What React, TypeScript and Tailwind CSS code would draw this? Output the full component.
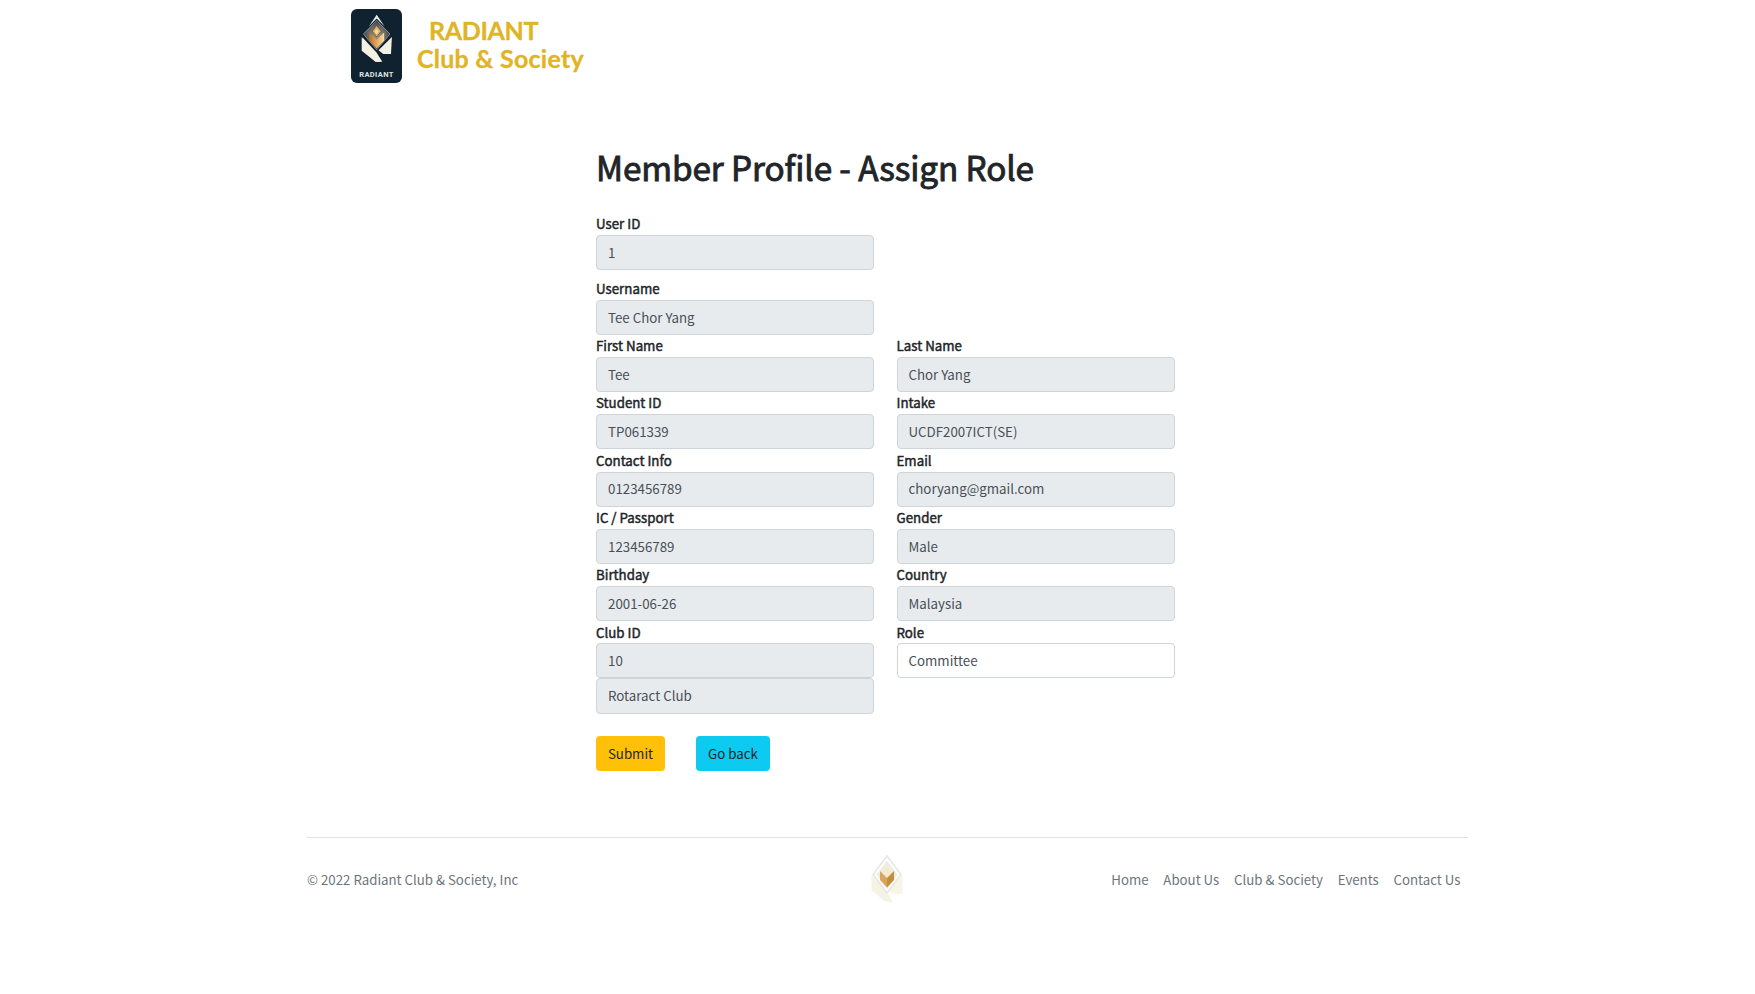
import React from "react";

function Emblem() {
  return (
    <>
      <defs>
        <radialGradient id="halo" gradientUnits="userSpaceOnUse" cx="25.7" cy="26" r="15">
          <stop offset="0" stopColor="#a99c86" />
          <stop offset="0.55" stopColor="#6d6a64" />
          <stop offset="1" stopColor="#2c3a45" />
        </radialGradient>
        <linearGradient id="gold" x1="0" y1="0" x2="1" y2="0">
          <stop offset="0" stopColor="#b5702c" />
          <stop offset="0.5" stopColor="#e3a860" />
          <stop offset="1" stopColor="#f6dca4" />
        </linearGradient>
      </defs>
      <path d="M10.7 28 L30 52.8 H24.5 L10.7 41.8 Z" fill="#f3f1e4" />
      <path d="M12 29 L25.5 43.5 L31.3 52.8 H24.7 L12 41.5 Z" fill="#f3f1e4" />
      <path d="M40.9 28 L40 45 H32.3 L27.5 41.3 Z" fill="#f3f1e4" />
      <path d="M25.7 8.5 L40.6 25 L25.7 43 L10.9 25 Z" fill="#13222e" />
      <path d="M25.7 11.5 L39 25 L25.7 40.8 L12.4 25 Z" fill="url(#halo)" stroke="#a3a7a6" strokeWidth="0.7" />
      <path d="M17.8 17.5 L25.7 5.8 L33.6 17.5 L25.7 9.6 Z" fill="#e6ebec" />
      <path d="M18.2 23.5 L25.7 30.5 L33.2 23.5 V31.5 L25.7 39.5 L18.2 31.5 Z" fill="url(#gold)" />
      <path d="M25.7 16.5 L30.2 22.2 L25.7 28 L21.2 22.2 Z" fill="#ddb470" stroke="#5b4a33" strokeWidth="0.7" />
      <path d="M25.7 20 L27.8 22.6 L25.7 25.4 L23.6 22.6 Z" fill="#f5d896" />
    </>
  );
}

function BrandBadge() {
  return (
    <div className="relative h-[74px] w-[51px] shrink-0 overflow-hidden rounded-[6px] bg-[#10212f]">
      <svg viewBox="0 0 51 74" className="h-full w-full">
        <Emblem />
      </svg>
      <span className="absolute inset-x-0 bottom-[4px] text-center font-['Roboto',sans-serif] text-[7.5px] leading-[9px] font-bold tracking-[0.4px] text-[#dfe3e4]">
        RADIANT
      </span>
    </div>
  );
}

function FooterMark() {
  return (
    <svg viewBox="0 0 32 49" className="h-[49px] w-[32px]">
      <path d="M0.5 20 L17 38 L22 47.5 L13 46 L0.5 35 Z" fill="#f5f4e4" />
      <path d="M31.5 20 V39 H22 L17 36 Z" fill="#f7f5e6" />
      <path d="M16 1 L30 19.5 L16 38 L2 19.5 Z" fill="#fff" stroke="#e6e6e2" strokeWidth="1.6" />
      <path d="M16 5.5 L26.5 19.5 L16 34 L5.5 19.5 Z" fill="#f1ece2" />
      <path d="M9 16 L16 23 V32.5 L9 25 Z" fill="#d9a45c" />
      <path d="M23 16 L16 23 V32.5 L23 25 Z" fill="#c58e3f" />
      <path d="M16 12 L19.5 17.5 L16 22.5 L12.5 17.5 Z" fill="#f8e8c4" />
    </svg>
  );
}

function Value({ text, editable = false }: { text: string; editable?: boolean }) {
  return (
    <div
      className={
        "flex h-[35.1px] items-center rounded-[4px] border border-[#ced4da] px-[11px] text-[13.3px] leading-none text-[#495057] " +
        (editable ? "bg-white" : "bg-[#e7ebee]")
      }
    >
      {text}
    </div>
  );
}

function Field({ label, children }: { label: string; children: React.ReactNode }) {
  return (
    <div>
      <div className="flex h-[22.2px] items-center text-[13.3px] leading-none text-[#212529] [-webkit-text-stroke:0.45px_#212529]">
        {label}
      </div>
      {children}
    </div>
  );
}

const rows = [
  ["First Name", "Tee", "Last Name", "Chor Yang"],
  ["Student ID", "TP061339", "Intake", "UCDF2007ICT(SE)"],
  ["Contact Info", "0123456789", "Email", "choryang@gmail.com"],
  ["IC / Passport", "123456789", "Gender", "Male"],
  ["Birthday", "2001-06-26", "Country", "Malaysia"],
];

const links = ["Home", "About Us", "Club & Society", "Events", "Contact Us"];

export default function App() {
  return (
    <div className="h-[994px] overflow-hidden bg-white font-['Noto_Sans_CJK_SC',sans-serif]">
      <header className="flex h-[93px] pt-[9px] pl-[351px]">
        <BrandBadge />
        <div className="ml-[15px] pt-[7px] font-['Lato',sans-serif] text-[25px] leading-[28px] font-bold text-[#e0b424] [-webkit-text-stroke:0.3px_#e0b424]">
          <div className="pl-[12px] tracking-[-0.35px]">RADIANT</div>
          <div className="tracking-[0.25px]">Club &amp; Society</div>
        </div>
      </header>

      <main className="ml-[596px] w-[579px] pt-[50px]">
        <h1 className="flex h-[48px] items-center text-[33.3px] leading-none tracking-[-0.1px] whitespace-nowrap text-[#212529] [-webkit-text-stroke:0.9px_#212529]">
          Member Profile - Assign Role
        </h1>
        <div className="mt-[22px] grid grid-cols-[278px_278.5px] gap-x-[22.5px]">
          <div className="pb-[7.2px]">
            <Field label="User ID">
              <Value text="1" />
            </Field>
          </div>
          <div />
          <Field label="Username">
            <Value text="Tee Chor Yang" />
          </Field>
          <div />
          {rows.map(([leftLabel, left, rightLabel, right]) => (
            <React.Fragment key={leftLabel}>
              <Field label={leftLabel}>
                <Value text={left} />
              </Field>
              <Field label={rightLabel}>
                <Value text={right} />
              </Field>
            </React.Fragment>
          ))}
          <Field label="Club ID">
            <Value text="10" />
            <Value text="Rotaract Club" />
          </Field>
          <Field label="Role">
            <Value text="Committee" editable />
          </Field>
        </div>
        <div className="mt-[22.4px] flex gap-[31px] text-[13.3px] leading-none text-[#212529]">
          <button className="h-[35px] w-[69px] rounded-[4px] bg-[#ffc107]">Submit</button>
          <button className="h-[35px] w-[74px] rounded-[4px] bg-[#0dcaf0]">Go back</button>
        </div>
      </main>

      <footer className="mt-[66px] ml-[307px] flex h-[84px] w-[1161px] items-center border-t border-[#dee2e6] text-[13.25px] leading-none text-[#6c757d]">
        <p className="w-[564px]">© 2022 Radiant Club &amp; Society, Inc</p>
        <FooterMark />
        <nav className="flex flex-1 justify-end gap-[14.8px] pr-[7.5px]">
          {links.map((link) => (
            <span key={link}>{link}</span>
          ))}
        </nav>
      </footer>
    </div>
  );
}
